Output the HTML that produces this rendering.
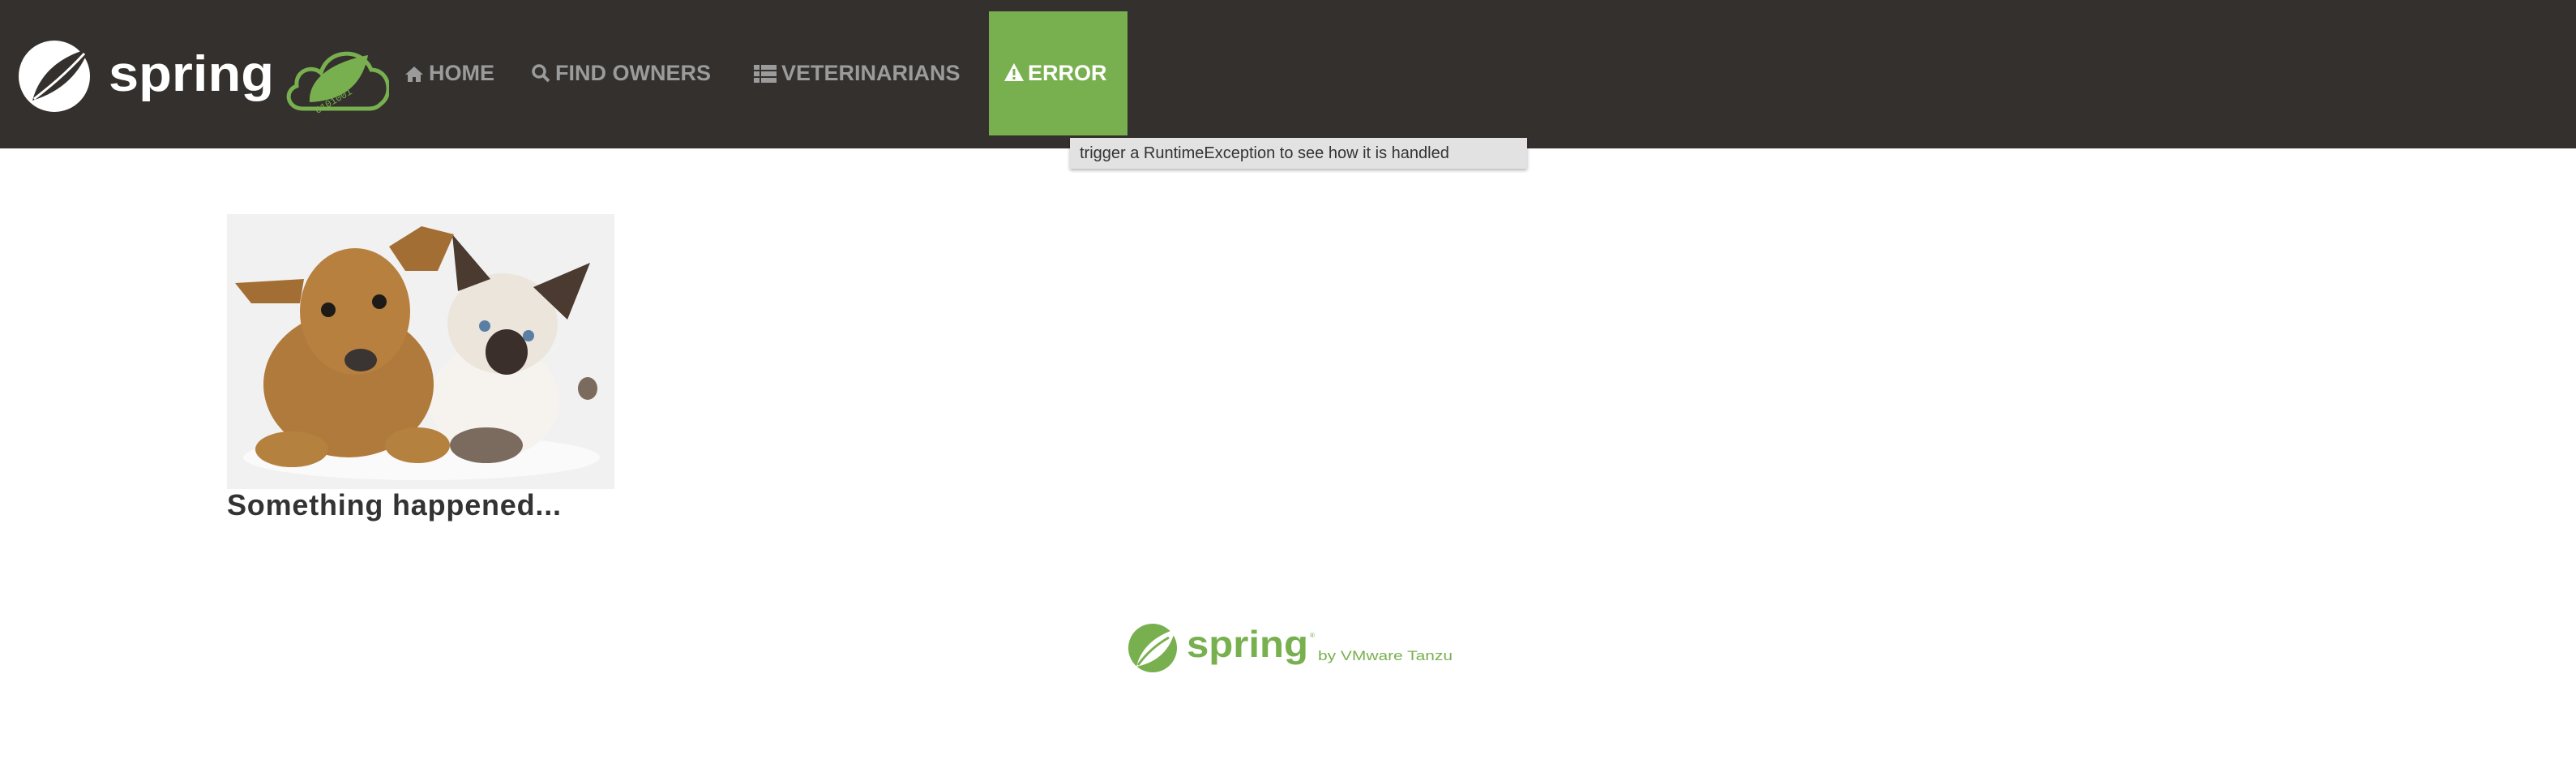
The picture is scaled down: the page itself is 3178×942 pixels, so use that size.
<!DOCTYPE html>
<html><head><meta charset="utf-8"><style>
*{margin:0;padding:0;box-sizing:border-box}
body{width:3178px;height:942px;background:#fff;position:relative;overflow:hidden;font-family:"Liberation Sans",sans-serif}
.hdr{position:absolute;left:0;top:0;width:3178px;height:183px;background:#34302d}
.nav{position:absolute;top:72px;font-size:27px;font-weight:bold;color:#9b9b9b;white-space:nowrap;line-height:36px}
.nav svg{vertical-align:-3px;margin-right:6px}
.err{position:absolute;left:1220px;top:14px;width:171px;height:153px;background:#79b04f}
.err span{position:absolute;left:18px;top:58px;color:#fff;font-size:27px;font-weight:bold;line-height:36px}
.tip{position:absolute;left:1320px;top:170px;width:564px;height:38px;background:#e2e2e2;box-shadow:0 2px 4px rgba(0,0,0,.3);font-size:20px;color:#333;line-height:38px;padding-left:12px}
h2{position:absolute;left:280px;top:602px;font-size:36px;font-weight:bold;color:#333;letter-spacing:0.8px}
</style></head><body>
<div class="hdr">
<svg style="position:absolute;left:20px;top:46px" width="460" height="96" viewBox="0 0 460 96">
<circle cx="47" cy="48" r="44" fill="#fff"/>
<path d="M20 78 C30 40 60 22 90 14 C78 44 58 66 20 78Z" fill="#34302d"/>
<path d="M22 76 C40 62 60 46 84 20" stroke="#fff" stroke-width="3" fill="none"/>
<text x="114" y="66" font-size="62" font-weight="bold" fill="#fff" font-family="Liberation Sans,sans-serif" textLength="204" lengthAdjust="spacingAndGlyphs">spring</text>
<g transform="translate(14,0)">
<path d="M340 88 C320 88 316 66 332 60 C330 40 352 34 362 44 C370 14 412 12 424 40 C446 40 452 70 436 82 C432 86 428 88 420 88Z" fill="none" stroke="#79b04f" stroke-width="5"/>
<path d="M348 80 C346 50 378 30 420 22 C414 54 394 78 348 80Z" fill="#79b04f"/>
<text x="352" y="86" font-size="12" fill="#79b04f" font-family="Liberation Mono,monospace" transform="rotate(-30 370 80)">0101001</text>
</g>
</svg>
<div class="nav" style="left:499px"><svg width="24" height="22" viewBox="0 0 24 22"><path d="M12 2 L1 12 L4 12 L4 21 L10 21 L10 15 L14 15 L14 21 L20 21 L20 12 L23 12Z" fill="#9b9b9b"/></svg>HOME</div>
<div class="nav" style="left:655px"><svg width="24" height="24" viewBox="0 0 24 24"><circle cx="10" cy="10" r="7" stroke="#9b9b9b" stroke-width="3.5" fill="none"/><path d="M15 15 L22 22" stroke="#9b9b9b" stroke-width="4"/></svg>FIND OWNERS</div>
<div class="nav" style="left:930px"><svg width="28" height="22" viewBox="0 0 28 22"><path d="M0 0h7v6H0zM9 0h19v6H9zM0 8h7v6H0zM9 8h19v6H9zM0 16h7v6H0zM9 16h19v6H9z" fill="#9b9b9b"/></svg>VETERINARIANS</div>
<div class="err"><span><svg width="26" height="24" viewBox="0 0 26 24" style="vertical-align:-2px;margin-right:4px"><path d="M13 1 L25 23 L1 23Z" fill="#fff"/><path d="M13 8 V16 M13 18 V21" stroke="#79b04f" stroke-width="3"/></svg>ERROR</span></div>
</div>
<div class="tip">trigger a RuntimeException to see how it is handled</div>
<svg style="position:absolute;left:280px;top:264px" width="478" height="339" viewBox="0 0 478 339">
<rect width="478" height="339" fill="#f1f1f1"/>
<ellipse cx="240" cy="300" rx="220" ry="28" fill="#fafafa"/>
<ellipse cx="330" cy="230" rx="80" ry="70" fill="#f6f3ef"/>
<ellipse cx="340" cy="135" rx="68" ry="62" fill="#ece5dc"/>
<path d="M285 95 L278 25 L325 80Z" fill="#4a3a30"/>
<path d="M378 90 L448 60 L420 130Z" fill="#4a3a30"/>
<ellipse cx="345" cy="170" rx="26" ry="28" fill="#3a2f2a"/>
<circle cx="318" cy="138" r="7" fill="#5a7fa5"/><circle cx="372" cy="150" r="7" fill="#5a7fa5"/>
<ellipse cx="320" cy="285" rx="45" ry="22" fill="#7b6a5e"/>
<ellipse cx="445" cy="215" rx="12" ry="14" fill="#7b6a5e"/>
<ellipse cx="150" cy="210" rx="105" ry="90" fill="#b07a3c"/>
<ellipse cx="158" cy="120" rx="68" ry="78" fill="#b7803f"/>
<path d="M95 80 L10 85 L30 110 L90 110Z" fill="#a36e34"/>
<path d="M200 40 L240 15 L280 25 L260 70 L220 70Z" fill="#a36e34"/>
<circle cx="125" cy="118" r="9" fill="#1e1a18"/><circle cx="188" cy="108" r="9" fill="#1e1a18"/>
<ellipse cx="165" cy="180" rx="20" ry="14" fill="#3a3432"/>
<ellipse cx="80" cy="290" rx="45" ry="22" fill="#b5813f"/>
<ellipse cx="235" cy="285" rx="40" ry="22" fill="#b5813f"/>
</svg>
<h2>Something happened...</h2>
<svg style="position:absolute;left:1390px;top:766px" width="410" height="66" viewBox="0 0 410 66">
<circle cx="32" cy="33" r="30" fill="#79b04f"/>
<path d="M12 56 C18 30 40 16 60 10 C54 34 40 50 12 56Z" fill="#fff"/>
<path d="M14 54 C24 40 38 28 52 20" stroke="#79b04f" stroke-width="3" fill="none"/>
<text x="74" y="44" font-size="46" font-weight="bold" fill="#79b04f" font-family="Liberation Sans,sans-serif" textLength="150" lengthAdjust="spacingAndGlyphs">spring</text>
<text x="226" y="20" font-size="8" fill="#79b04f">®</text>
<text x="236" y="48" font-size="17" fill="#79b04f" font-family="Liberation Sans,sans-serif" textLength="166" lengthAdjust="spacingAndGlyphs">by VMware Tanzu</text>
</svg>
</body></html>
